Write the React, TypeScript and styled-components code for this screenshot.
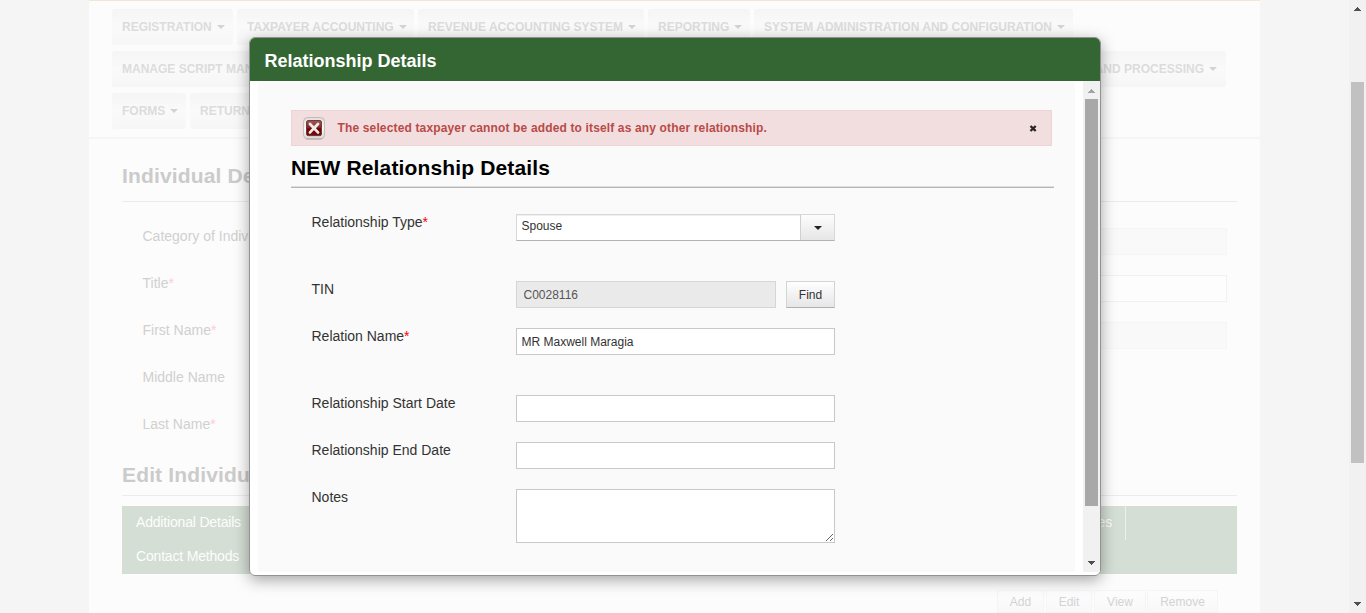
import React from "react";
import styled, { createGlobalStyle } from "styled-components";

const Global = createGlobalStyle`
  * { box-sizing: border-box; }
  body { margin: 0; overflow: hidden; background: #f5f5f5; font-family: "Liberation Sans", Arial, sans-serif; }
  input, textarea, button { font-family: inherit; margin: 0; outline: none; }
`;

const Screen = styled.div`
  position: relative;
  display: flex;
  width: 1366px;
  height: 613px;
  overflow: hidden;
  background: #f5f5f5;
`;

const Page = styled.main`
  width: 1171px;
  margin-left: 89px;
  margin-right: 89px;
  background: #fcfcfc;
  border-top: 1px solid #f3e6d2;
  flex: none;
`;

const Nav = styled.nav`
  display: flex;
  flex-direction: column;
  gap: 6px;
  height: 138px;
  padding: 8px 23px 0;
  border-bottom: 2px solid #f5f5f5;
`;

const NavRow = styled.div<{ $spread?: boolean }>`
  display: flex;
  gap: 4px;
  ${(p) => p.$spread && "width: 1114px; justify-content: space-between;"}
`;

const NavItem = styled.div<{ $w: number; $end?: boolean }>`
  display: flex;
  align-items: center;
  justify-content: ${(p) => (p.$end ? "flex-end" : "space-between")};
  gap: 5px;
  width: ${(p) => p.$w}px;
  height: 36px;
  padding: 0 9px 0 10px;
  border-radius: 3px;
  background: linear-gradient(#f5f5f5, #fafafa 50%, #f6f6f6);
  color: #dcdcdc;
  font-size: 12px;
  font-weight: bold;
  white-space: nowrap;
`;

const Caret = styled.i<{ $color: string }>`
  width: 0;
  height: 0;
  border: 4px solid transparent;
  border-top-color: ${(p) => p.$color};
  border-bottom: 0;
`;

const Section = styled.section`
  padding: 0 23px 0 33px;
`;

const SectionTitle = styled.h2<{ $h: number; $pad: number }>`
  height: ${(p) => p.$h}px;
  margin: 0;
  padding-top: ${(p) => p.$pad}px;
  border-bottom: 1px solid #ececec;
  color: #cbcbcb;
  font-size: 21px;
  line-height: 24px;
  letter-spacing: 0.15px;
`;

const FieldGrid = styled.div`
  display: flex;
  flex-direction: column;
  gap: 20px;
  height: 255px;
  padding: 26px 10px 0 20.5px;
`;

const FieldRow = styled.div`
  display: flex;
  justify-content: space-between;
  height: 27px;
`;

const PageLabel = styled.label`
  color: #d0d0d0;
  font-size: 14px;
  line-height: 17px;
  span { color: #fcc; }
`;

const PageInput = styled.div<{ $off?: boolean }>`
  width: 318px;
  height: 27px;
  border: 1px solid ${(p) => (p.$off ? "#f5f5f5" : "#f1f1f1")};
  background: ${(p) => (p.$off ? "#f9f9f9" : "#fdfdfd")};
`;

const Tabs = styled.div`
  margin-top: 10px;
  height: 68px;
  background: #d4ded4;
  color: #fdfdfd;
  font-size: 14px;
  letter-spacing: -0.18px;
`;

const TabRow = styled.div`
  display: flex;
  justify-content: space-between;
  width: 1004px;
  height: 34px;
`;

const Tab = styled.div<{ $line?: boolean }>`
  padding: 0 13px 0 14px;
  line-height: 33px;
  border-right: ${(p) => (p.$line ? "1px solid #edf1ed" : "0")};
`;

const Actions = styled.div`
  display: flex;
  justify-content: flex-end;
  gap: 2px;
  padding: 16px 19px 0 0;
`;

const Action = styled.div<{ $w: number }>`
  width: ${(p) => p.$w}px;
  height: 23px;
  border: 1px solid #f5f5f5;
  background: linear-gradient(#fdfdfd, #f8f8f8);
  color: #d3d3d3;
  font-size: 12px;
  line-height: 22px;
  text-align: center;
  &:last-child { margin-left: -1px; }
`;

const ScrollTrack = styled.div`
  display: flex;
  flex-direction: column;
  align-items: center;
  width: 17px;
  flex: none;
  background: #f1f1f1;
`;

const ScrollArrow = styled.div<{ $top?: number; $bottom?: number }>`
  display: flex;
  justify-content: center;
  align-items: center;
  width: 17px;
  height: 17px;
  padding-top: ${(p) => p.$top ?? 0}px;
  padding-bottom: ${(p) => p.$bottom ?? 0}px;
  flex: none;
`;

const ScrollThumb = styled.div<{ $top: number; $h: number; $color: string }>`
  width: 13px;
  height: ${(p) => p.$h}px;
  margin-top: ${(p) => p.$top}px;
  margin-bottom: auto;
  background: ${(p) => p.$color};
`;

const Dialog = styled.div`
  position: absolute;
  left: 249px;
  top: 37px;
  width: 852px;
  height: 539px;
  display: flex;
  flex-direction: column;
  overflow: hidden;
  border: 1px solid #929292;
  border-radius: 6px;
  background: #fff;
`;

const DialogShadow = styled.div`
  position: absolute;
  left: 249px;
  top: 37px;
  width: 852px;
  height: 539px;
  border-radius: 6px;
  box-shadow: 0 4px 15px rgba(0, 0, 0, 0.35);
`;

const DialogHeader = styled.header`
  height: 43px;
  flex: none;
  padding-left: 14.5px;
  background: #336633;
  color: #fff;
  font-size: 18px;
  font-weight: bold;
  line-height: 47px;
`;

const DialogBody = styled.div`
  display: flex;
  height: 491px;
  padding-left: 8px;
`;

const Form = styled.div`
  width: 817px;
  margin-right: 8px;
  margin-top: 1px;
  padding: 28px 0 0 33px;
  background: #fafafa;
  flex: none;
`;

const Alert = styled.div`
  display: flex;
  align-items: center;
  width: 761px;
  height: 36px;
  padding: 0 14px 0 11px;
  border: 1px solid #eed3d7;
  background: #f2dede;
  color: #b94a48;
  font-size: 12px;
  font-weight: bold;
`;

const AlertText = styled.span`
  flex: 1;
  margin-left: 11.5px;
  letter-spacing: 0.145px;
  line-height: 34px;
  margin-top: -1px;
`;

const FormTitle = styled.h2`
  width: 763px;
  height: 42px;
  margin: 0 0 26px;
  padding-top: 10px;
  border-bottom: 1px solid #b5b5b5;
  box-shadow: inset 0 -1px #dedede;
  color: #000;
  font-size: 21px;
  line-height: 24px;
  letter-spacing: 0.15px;
`;

const Row = styled.div<{ $gap?: number }>`
  display: flex;
  margin-bottom: ${(p) => p.$gap ?? 20}px;
`;

const Label = styled.label`
  width: 225px;
  padding-left: 20.5px;
  color: #333;
  font-size: 14px;
  line-height: 17px;
  span { color: #f00; }
`;

const Input = styled.input<{ $w?: number }>`
  width: ${(p) => p.$w ?? 319}px;
  height: 27px;
  padding: 0 4.5px;
  border: 1px solid #c8c8c8;
  border-radius: 0;
  background: #fff;
  color: #333;
  font-size: 12px;
  &:disabled { padding: 0 6.5px; border-color: #d6d6d6; background: #eaeaea; color: #555; }
`;

const Select = styled.div`
  display: flex;
  width: 319px;
  height: 27px;
  border: 1px solid #d8d8d8;
  border-bottom-color: #b3b3b3;
  background: #fff;
  box-shadow: inset 0 1px #f0f0f0;
  color: #333;
  font-size: 12px;
`;

const SelectValue = styled.div`
  flex: 1;
  padding-left: 4.5px;
  line-height: 23px;
`;

const SelectButton = styled.div`
  display: flex;
  align-items: center;
  justify-content: center;
  width: 34px;
  padding: 1px 0 0 1px;
  border-left: 1px solid #d0d0d0;
  background: linear-gradient(#fdfdfd, #e6e6e6);
`;

const FindButton = styled.button`
  width: 49px;
  height: 27px;
  margin-left: 10px;
  padding: 0;
  border: 1px solid #d4d4d4;
  border-bottom-color: #b0b0b0;
  border-radius: 0;
  background: linear-gradient(#fefefe, #e6e6e6);
  color: #333;
  font-size: 12px;
`;

const Notes = styled.textarea`
  width: 319px;
  height: 54px;
  border: 1px solid #c8c8c8;
  border-radius: 0;
  background: #fff;
`;

const Triangle = ({ up, color }: { up?: boolean; color: string }) => (
  <svg width="7" height="4" viewBox="0 0 7 4" shapeRendering="crispEdges">
    <path d={up ? "M3 0h1v1h1v1h1v1h1v1H0V3h1V2h1V1h1z" : "M0 0h7v1H6v1H5v1H4v1H3V3H2V2H1V1H0z"} fill={color} />
  </svg>
);

const ErrorIcon = () => (
  <svg width="23" height="24" viewBox="0 0 23 24">
    <defs>
      <linearGradient id="frame" x1="0" y1="0" x2="0" y2="1">
        <stop offset="0" stopColor="#e0dcdc" />
        <stop offset="0.5" stopColor="#fff" />
        <stop offset="1" stopColor="#d8d4d4" />
      </linearGradient>
      <linearGradient id="tile" x1="0" y1="0" x2="0" y2="1">
        <stop offset="0" stopColor="#a85a5a" />
        <stop offset="0.45" stopColor="#852828" />
        <stop offset="0.55" stopColor="#6a0000" />
        <stop offset="1" stopColor="#7c0c0c" />
      </linearGradient>
    </defs>
    <rect x="0.6" y="1.5" width="20.8" height="21.5" rx="4" fill="url(#frame)" stroke="#c4b8b8" strokeWidth="1" />
    <path d="M3 23h16" stroke="#a99e9e" strokeWidth="0.8" />
    <rect x="3.6" y="4.6" width="14.8" height="15" rx="1.5" fill="url(#tile)" stroke="#6b3030" />
    <path d="M7 8l8 8.4M15 8l-8 8.4" stroke="#f0eaea" strokeWidth="2.8" strokeLinecap="round" />
  </svg>
);

const CloseIcon = () => (
  <svg width="8" height="8" viewBox="0 0 8 8" style={{ overflow: "visible" }}>
    <path d="M1.5 2l5.2 5M6.7 2L1.5 7" stroke="#2b2626" strokeWidth="2.4" />
  </svg>
);

const navTop: [string, number][] = [
  ["REGISTRATION", 121],
  ["TAXPAYER ACCOUNTING", 177],
  ["REVENUE ACCOUNTING SYSTEM", 226],
  ["REPORTING", 102],
  ["SYSTEM ADMINISTRATION AND CONFIGURATION", 319],
];

const pageFields: { label: string; required?: boolean; input?: "on" | "off" }[] = [
  { label: "Category of Individual", input: "off" },
  { label: "Title", required: true, input: "on" },
  { label: "First Name", required: true, input: "off" },
  { label: "Middle Name" },
  { label: "Last Name", required: true },
];

const MenuItem = ({ text, w, end }: { text: string; w: number; end?: boolean }) => (
  <NavItem $w={w} $end={end}>
    {text}
    <Caret $color="#d3d3d3" />
  </NavItem>
);

export default function App() {
  return (
    <>
      <Global />
      <Screen>
        <Page>
          <Nav>
            <NavRow>
              {navTop.map(([text, w]) => <MenuItem key={text} text={text} w={w} />)}
            </NavRow>
            <NavRow $spread>
              <MenuItem text="MANAGE SCRIPT MANAGEMENT" w={216} />
              <MenuItem text="RETURNS AND PROCESSING" w={200} end />
            </NavRow>
            <NavRow>
              <MenuItem text="FORMS" w={74} />
              <MenuItem text="RETURNS" w={90} />
            </NavRow>
          </Nav>
          <Section>
            <SectionTitle $h={63} $pad={25}>Individual Details</SectionTitle>
            <FieldGrid>
              {pageFields.map((f) => (
                <FieldRow key={f.label}>
                  <PageLabel>{f.label}{f.required && <span>*</span>}</PageLabel>
                  {f.input && <PageInput $off={f.input === "off"} />}
                </FieldRow>
              ))}
            </FieldGrid>
            <SectionTitle $h={39} $pad={6}>Edit Individual</SectionTitle>
            <Tabs>
              <TabRow>
                <Tab>Additional Details</Tab>
                <Tab $line>Attributes</Tab>
              </TabRow>
              <TabRow>
                <Tab>Contact Methods</Tab>
              </TabRow>
            </Tabs>
            <Actions>
              <Action $w={47}>Add</Action>
              <Action $w={46}>Edit</Action>
              <Action $w={52}>View</Action>
              <Action $w={71}>Remove</Action>
            </Actions>
          </Section>
        </Page>
        <ScrollTrack>
          <ScrollArrow><Triangle up color="#505050" /></ScrollArrow>
          <ScrollThumb $top={65} $h={381} $color="#c1c1c1" />
          <ScrollArrow $bottom={1}><Triangle color="#505050" /></ScrollArrow>
        </ScrollTrack>

        <DialogShadow />
        <Dialog>
          <DialogHeader>Relationship Details</DialogHeader>
          <DialogBody>
            <Form>
              <Alert>
                <ErrorIcon />
                <AlertText>The selected taxpayer cannot be added to itself as any other relationship.</AlertText>
                <CloseIcon />
              </Alert>
              <FormTitle>NEW Relationship Details</FormTitle>
              <Row $gap={40}>
                <Label>Relationship Type<span>*</span></Label>
                <Select>
                  <SelectValue>Spouse</SelectValue>
                  <SelectButton><Caret $color="#222" /></SelectButton>
                </Select>
              </Row>
              <Row>
                <Label>TIN</Label>
                <Input $w={260} disabled defaultValue="C0028116" />
                <FindButton>Find</FindButton>
              </Row>
              <Row $gap={40}>
                <Label>Relation Name<span>*</span></Label>
                <Input defaultValue="MR Maxwell Maragia" />
              </Row>
              <Row>
                <Label>Relationship Start Date</Label>
                <Input />
              </Row>
              <Row>
                <Label>Relationship End Date</Label>
                <Input />
              </Row>
              <Row $gap={0}>
                <Label>Notes</Label>
                <Notes />
              </Row>
            </Form>
            <ScrollTrack>
              <ScrollArrow $top={3}><Triangle up color="#a3a3a3" /></ScrollArrow>
              <ScrollThumb $top={1} $h={407} $color="#a8a8a8" />
              <ScrollArrow $bottom={1}><Triangle color="#505050" /></ScrollArrow>
            </ScrollTrack>
          </DialogBody>
        </Dialog>
      </Screen>
    </>
  );
}
